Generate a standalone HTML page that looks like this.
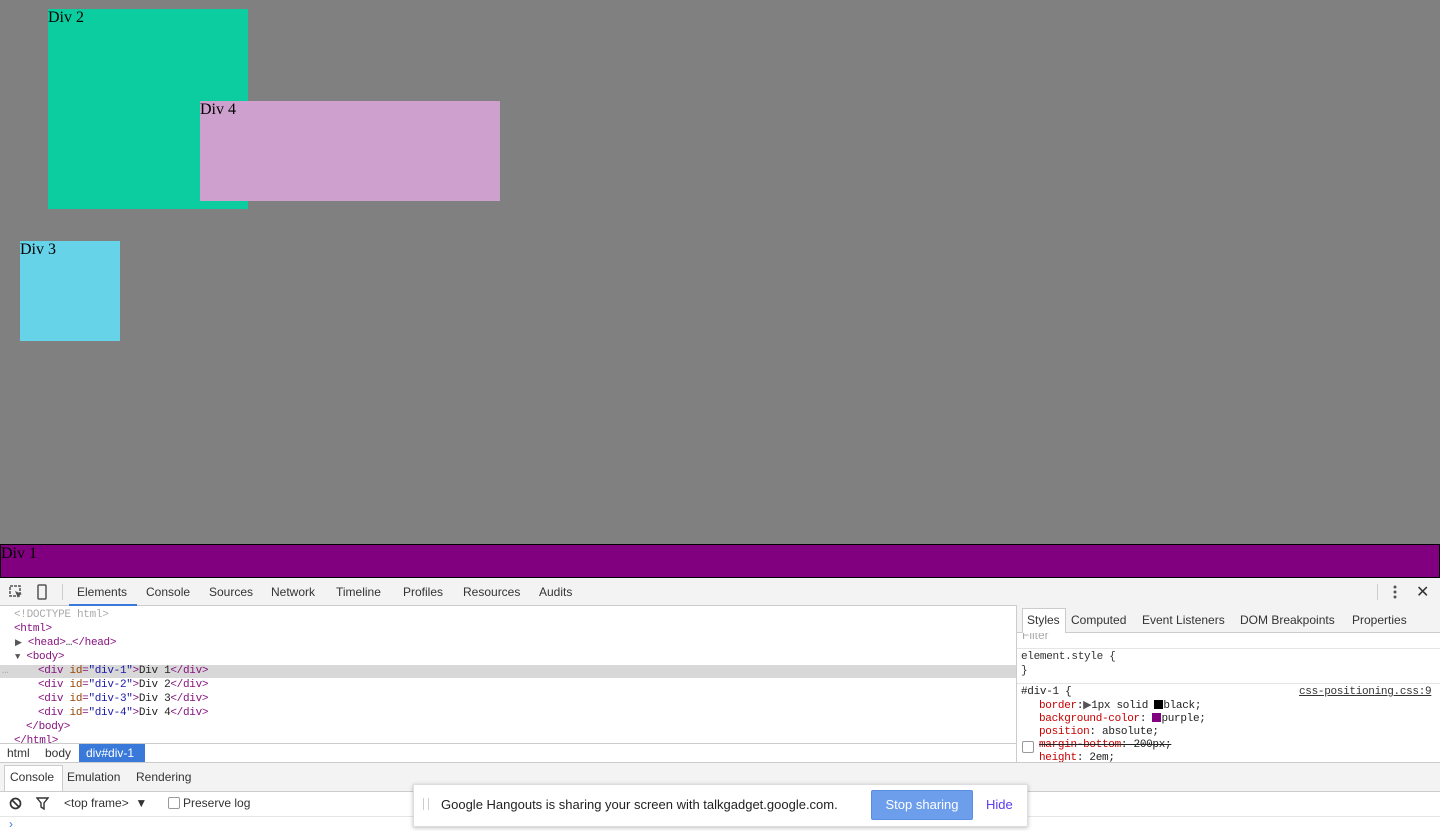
<!DOCTYPE html>
<html><head><style>
body{margin:0;width:1440px;height:829px;overflow:hidden;position:relative;background:#fff;font-family:"Liberation Sans",sans-serif;}
.a{position:absolute;}
.mono{font-family:"Liberation Mono",monospace;font-size:11px;}
.ser{font-family:"Liberation Serif",serif;font-size:16px;color:#000;}
.t{font-size:12px;color:#333;}
.tag{color:#881280}.at{color:#994500}.av{color:#1a1aa6}
.ln{position:absolute;font-family:"Liberation Mono",monospace;font-size:11px;line-height:14px;white-space:pre;color:#881280;letter-spacing:-0.3px}
</style></head><body>
<div class="a" style="left:0;top:0;width:1440px;height:544px;background:#808080"></div>
<div class="a ser" style="left:48px;top:9px;width:200px;height:200px;background:#0ccda0;line-height:18px">Div 2</div>
<div class="a ser" style="left:200px;top:101px;width:300px;height:100px;background:#cda0cd;line-height:18px">Div 4</div>
<div class="a ser" style="left:20px;top:241px;width:100px;height:100px;background:#66d3e8;line-height:18px">Div 3</div>
<div class="a ser" style="left:0;top:544px;width:1438px;height:32px;background:#800080;border:1px solid #000;line-height:18px">Div 1</div>

<div class="a" style="left:0;top:578px;width:1440px;height:27px;background:#f3f3f3;border-bottom:1px solid #ccc"></div>
<svg class="a" style="left:9px;top:585px" width="14" height="14"><rect x="1" y="1" width="10" height="10" fill="none" stroke="#555" stroke-width="1.5" stroke-dasharray="3 1"/><path d="M6 6l7 3-3 1-1 3z" fill="#555"/></svg>
<svg class="a" style="left:37px;top:584px" width="10" height="16"><rect x="1" y="1" width="8" height="14" rx="1" fill="none" stroke="#555" stroke-width="1.5"/></svg>
<div class="a" style="left:62px;top:584px;width:1px;height:16px;background:#ccc"></div>
<div class="a t" style="left:69px;top:578px;width:68px;height:26px;border-bottom:2px solid #3879d9"></div>
<div class="a t" style="top:585px;left:77px">Elements</div>
<div class="a t" style="top:585px;left:146px">Console</div>
<div class="a t" style="top:585px;left:209px">Sources</div>
<div class="a t" style="top:585px;left:271px">Network</div>
<div class="a t" style="top:585px;left:336px">Timeline</div>
<div class="a t" style="top:585px;left:403px">Profiles</div>
<div class="a t" style="top:585px;left:463px">Resources</div>
<div class="a t" style="top:585px;left:539px">Audits</div>
<div class="a" style="left:1377px;top:584px;width:1px;height:16px;background:#ccc"></div>
<svg class="a" style="left:1392px;top:584px" width="6" height="16"><circle cx="3" cy="3" r="1.5" fill="#555"/><circle cx="3" cy="8" r="1.5" fill="#555"/><circle cx="3" cy="13" r="1.5" fill="#555"/></svg>
<div class="a" style="left:1416px;top:582px;font-size:16px;color:#333">✕</div>

<div class="a" style="left:0;top:665px;width:1016px;height:13px;background:#d8d8d8"></div>
<div class="ln" style="left:14px;top:608px;color:#aaa">&lt;!DOCTYPE html&gt;</div>
<div class="ln" style="left:14px;top:622px">&lt;html&gt;</div>
<div class="ln" style="left:15px;top:636px"><span style="color:#555;font-size:9px">▶</span> &lt;head&gt;<span style="color:#333">…</span>&lt;/head&gt;</div>
<div class="ln" style="left:15px;top:650px"><span style="color:#555;font-size:9px">▼</span> &lt;body&gt;</div>
<div class="ln" style="left:2px;top:664px;color:#aaa">…</div>
<div class="ln" style="left:38px;top:664px">&lt;div <span class="at">id</span>=<span class="av">"div-1"</span>&gt;<span style="color:#222">Div 1</span>&lt;/div&gt;</div>
<div class="ln" style="left:38px;top:678px">&lt;div <span class="at">id</span>=<span class="av">"div-2"</span>&gt;<span style="color:#222">Div 2</span>&lt;/div&gt;</div>
<div class="ln" style="left:38px;top:692px">&lt;div <span class="at">id</span>=<span class="av">"div-3"</span>&gt;<span style="color:#222">Div 3</span>&lt;/div&gt;</div>
<div class="ln" style="left:38px;top:706px">&lt;div <span class="at">id</span>=<span class="av">"div-4"</span>&gt;<span style="color:#222">Div 4</span>&lt;/div&gt;</div>
<div class="ln" style="left:26px;top:720px">&lt;/body&gt;</div>
<div class="ln" style="left:14px;top:734px">&lt;/html&gt;</div>
<div class="a" style="left:0;top:743px;width:1016px;height:19px;background:#fff;border-top:1px solid #ccc"></div>
<div class="a t" style="left:7px;top:746px">html</div>
<div class="a t" style="left:45px;top:746px">body</div>
<div class="a" style="left:79px;top:744px;width:66px;height:18px;background:#3879d9"></div>
<div class="a t" style="left:86px;top:746px;color:#fff">div#div-1</div>

<div class="a" style="left:1016px;top:605px;width:1px;height:158px;background:#ccc"></div>
<div class="a" style="left:1017px;top:605px;width:423px;height:27px;background:#f3f3f3;border-bottom:1px solid #ccc"></div>
<div class="a" style="left:1022px;top:608px;width:42px;height:24px;background:#fff;border:1px solid #ccc;border-bottom:none"></div>
<div class="a t" style="top:613px;left:1027px">Styles</div>
<div class="a t" style="top:613px;left:1071px">Computed</div>
<div class="a t" style="top:613px;left:1142px">Event Listeners</div>
<div class="a t" style="top:613px;left:1240px">DOM Breakpoints</div>
<div class="a t" style="top:613px;left:1352px">Properties</div>
<div class="a" style="top:633px;left:1022px;color:#aaa;height:8px;overflow:hidden;font-size:12px;line-height:12px"><span style="position:relative;top:-4px">Filter</span></div>
<div class="a" style="left:1017px;top:648px;width:423px;height:1px;background:#e5e5e5"></div>
<div class="ln" style="left:1021px;top:650px;color:#333">element.style {</div>
<div class="ln" style="left:1021px;top:664px;color:#333">}</div>
<div class="a" style="left:1017px;top:683px;width:423px;height:1px;background:#e5e5e5"></div>
<div class="ln" style="left:1021px;top:685px;color:#222">#div-1 {</div>
<div class="ln" style="left:1039px;top:700px;color:#222;line-height:13px"><span style="color:#c80000">border</span>:<span style="color:#555">▶</span>1px solid <span style="display:inline-block;width:9px;height:9px;background:#000;vertical-align:-1px"></span>black;
<span style="color:#c80000">background-color</span>: <span style="display:inline-block;width:9px;height:9px;background:#800080;vertical-align:-1px"></span>purple;
<span style="color:#c80000">position</span>: absolute;
<span style="text-decoration:line-through"><span style="color:#c80000">margin-bottom</span>: 200px;</span>
<span style="color:#c80000">height</span>: 2em;</div>
<div class="ln" style="left:1299px;top:685px;color:#333;text-decoration:underline">css-positioning.css:9</div>
<div class="a" style="left:1022px;top:741px;width:10px;height:10px;border:1px solid #999;border-radius:2px;background:#fff"></div>
<div class="a" style="left:1017px;top:762px;width:423px;height:1px;background:#ccc"></div>

<div class="a" style="left:0;top:762px;width:1440px;height:28px;background:#f3f3f3;border-top:1px solid #ccc;border-bottom:1px solid #ccc"></div>
<div class="a" style="left:4px;top:765px;width:57px;height:25px;background:#fff;border:1px solid #ccc;border-bottom:none"></div>
<div class="a t" style="left:10px;top:770px">Console</div>
<div class="a t" style="left:67px;top:770px">Emulation</div>
<div class="a t" style="left:136px;top:770px">Rendering</div>
<div class="a" style="left:0;top:816px;width:1440px;height:1px;background:#e5e5e5"></div>
<svg class="a" style="left:9px;top:797px" width="13" height="13"><circle cx="6.5" cy="6.5" r="5" fill="none" stroke="#333" stroke-width="1.7"/><path d="M3 3l7 7" stroke="#333" stroke-width="1.7"/></svg>
<svg class="a" style="left:36px;top:797px" width="13" height="13"><path d="M1 1h11l-4 5v6l-3-2v-4z" fill="none" stroke="#333" stroke-width="1.4"/></svg>
<div class="a t" style="left:64px;top:796px">&lt;top frame&gt; &nbsp;▼</div>
<div class="a" style="left:168px;top:797px;width:10px;height:10px;border:1px solid #999;border-radius:2px"></div>
<div class="a t" style="left:183px;top:796px">Preserve log</div>
<div class="a" style="left:9px;top:817px;color:#3879d9;font-size:12px">›</div>

<div class="a" style="left:413px;top:784px;width:613px;height:41px;background:#fff;border:1px solid #ddd;box-shadow:0 1px 4px rgba(0,0,0,.25)"></div>
<div class="a" style="left:423px;top:798px;width:4px;height:12px;border-left:1px solid #ccc;border-right:1px solid #ccc"></div>
<div class="a" style="left:441px;top:797px;font-size:13px;color:#222">Google Hangouts is sharing your screen with talkgadget.google.com.</div>
<div class="a" style="left:871px;top:790px;width:100px;height:28px;background:#6d9eeb;border:1px solid #5a8ee0;border-radius:2px;color:#fff;font-size:13px;text-align:center;line-height:28px">Stop sharing</div>
<div class="a" style="left:986px;top:797px;font-size:13px;color:#5a3cf0">Hide</div>
</body></html>
